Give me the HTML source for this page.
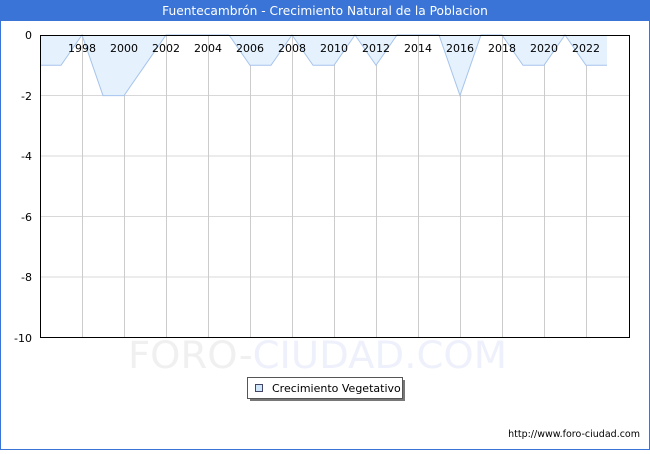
<!DOCTYPE html>
<html><head><meta charset="utf-8"><style>
body{margin:0;width:650px;height:450px;overflow:hidden;background:#fff;font-family:"DejaVu Sans","Liberation Sans",sans-serif}
</style></head><body>
<svg width="650" height="450" xmlns="http://www.w3.org/2000/svg" font-family="DejaVu Sans, Liberation Sans, sans-serif">
<rect x="0.5" y="0.5" width="649" height="449" fill="#fff" stroke="#3a74d6"/>
<rect x="0" y="0" width="650" height="21" fill="#3a74d6"/>
<text x="325" y="15" text-anchor="middle" font-size="12.2" fill="#fff">Fuentecambrón - Crecimiento Natural de la Poblacion</text>
<g stroke="#d8d8d8" stroke-width="1">
<line x1="40" y1="95.5" x2="630" y2="95.5"/><line x1="40" y1="156" x2="630" y2="156"/><line x1="40" y1="216.5" x2="630" y2="216.5"/><line x1="40" y1="277" x2="630" y2="277"/>
</g>
<g stroke="#cccccc">
<line x1="82.5" y1="35" x2="82.5" y2="338"/><line x1="124.5" y1="35" x2="124.5" y2="338"/><line x1="166.5" y1="35" x2="166.5" y2="338"/><line x1="208.5" y1="35" x2="208.5" y2="338"/><line x1="250.5" y1="35" x2="250.5" y2="338"/><line x1="292.5" y1="35" x2="292.5" y2="338"/><line x1="334.5" y1="35" x2="334.5" y2="338"/><line x1="376.5" y1="35" x2="376.5" y2="338"/><line x1="418.5" y1="35" x2="418.5" y2="338"/><line x1="460.5" y1="35" x2="460.5" y2="338"/><line x1="502.5" y1="35" x2="502.5" y2="338"/><line x1="544.5" y1="35" x2="544.5" y2="338"/><line x1="586.5" y1="35" x2="586.5" y2="338"/>
</g>
<path d="M40 35 L40 65.3 L61 65.3 L82 35 L103 95.6 L124 95.6 L145 65.3 L166 35 L229 35 L250 65.3 L271 65.3 L292 35 L313 65.3 L334 65.3 L355 35 L376 65.3 L397 35 L439 35 L460 95.6 L481 35 L502 35 L523 65.3 L544 65.3 L565 35 L586 65.3 L607 65.3 L607 35 Z" fill="#e5f2fe"/>
<path d="M40 65.3 L61 65.3 L82 35 L103 95.6 L124 95.6 L145 65.3 L166 35 L229 35 L250 65.3 L271 65.3 L292 35 L313 65.3 L334 65.3 L355 35 L376 65.3 L397 35 L439 35 L460 95.6 L481 35 L502 35 L523 65.3 L544 65.3 L565 35 L586 65.3 L607 65.3" fill="none" stroke="#a6c4ec" stroke-width="1"/>
<rect x="40.5" y="35.5" width="589" height="302" fill="none" stroke="#000"/>
<g font-size="11" fill="#000" text-anchor="middle">
<text x="82" y="52">1998</text><text x="124" y="52">2000</text><text x="166" y="52">2002</text><text x="208" y="52">2004</text><text x="250" y="52">2006</text><text x="292" y="52">2008</text><text x="334" y="52">2010</text><text x="376" y="52">2012</text><text x="418" y="52">2014</text><text x="460" y="52">2016</text><text x="502" y="52">2018</text><text x="544" y="52">2020</text><text x="586" y="52">2022</text>
</g>
<g font-size="11" fill="#000" text-anchor="end">
<text x="32" y="39">0</text><text x="32" y="100">-2</text><text x="32" y="160">-4</text><text x="32" y="221">-6</text><text x="32" y="281">-8</text><text x="32" y="342">-10</text>
</g>
<text x="128" y="368" font-size="37" fill="#f0f0f0" textLength="379" lengthAdjust="spacingAndGlyphs">FORO-<tspan fill="#eef0fb">CIUDAD.COM</tspan></text>
<rect x="250" y="380" width="155" height="21" fill="#777"/>
<rect x="247.5" y="377.5" width="155" height="21" fill="#fff" stroke="#555"/>
<rect x="255.5" y="384.5" width="7" height="7" fill="#cfe6fb" stroke="#446"/>
<text x="272" y="392" font-size="11" fill="#000">Crecimiento Vegetativo</text>
<text x="640" y="437" font-size="9.5" fill="#000" text-anchor="end">http://www.foro-ciudad.com</text>
</svg>
</body></html>
